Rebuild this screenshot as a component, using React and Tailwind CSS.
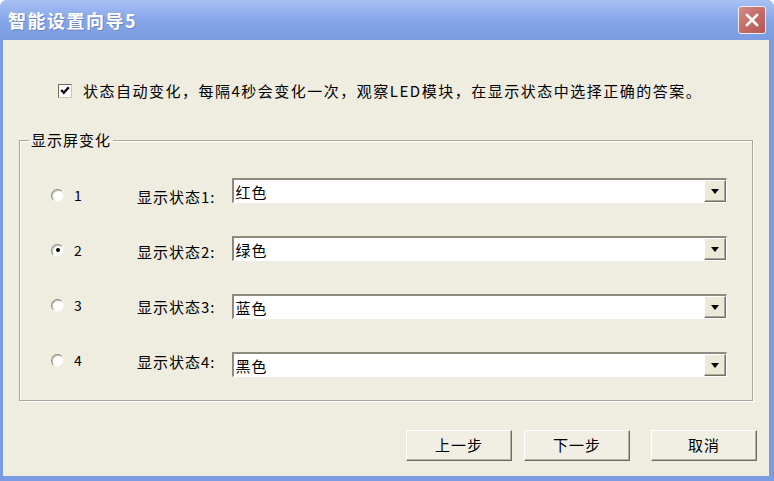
import React from "react";

const F = { fontFamily: '"Noto Sans CJK SC", "Noto Sans", sans-serif' };

function Radio({ checked }) {
  return (
    <div className="w-[13px] h-[13px] rounded-full border border-t-[#8a8a84] border-l-[#8a8a84] border-b-[#f4f3ee] border-r-[#f4f3ee] bg-white flex items-center justify-center shadow-[inset_1px_1px_0_#c9c7bb]">
      {checked && <div className="w-[4px] h-[4px] rounded-full bg-black" />}
    </div>
  );
}

function Combo({ value }) {
  return (
    <div className="w-[495px] h-[25px] border-t-[2px] border-l-[2px] border-t-[#8d8b80] border-l-[#8d8b80] border-b border-r border-b-white border-r-white bg-white flex items-stretch">
      <div className="flex-1 flex items-center pl-[2px] text-[15px] tracking-[1px] text-black leading-none">{value}</div>
      <div className="w-[22px] bg-[#ECE9D8] border border-t-white border-l-white border-b-[#716f64] border-r-[#716f64] shadow-[inset_-1px_-1px_0_#aca899] flex items-center justify-center">
        <svg width="8" height="5" viewBox="0 0 8 5"><path d="M0 0H8L4 5Z" fill="#000" /></svg>
      </div>
    </div>
  );
}

function Btn({ children }) {
  return (
    <div className="w-[106px] h-[31px] bg-[#F1EFE4] border border-t-white border-l-white border-b-[#6e6c62] border-r-[#6e6c62] shadow-[inset_-1px_-1px_0_#b3b1a5] flex items-center justify-center text-[15px] tracking-[1px] text-black">
      {children}
    </div>
  );
}

export default function App() {
  const rows = [
    { n: "1", v: "红色", c: false },
    { n: "2", v: "绿色", c: true },
    { n: "3", v: "蓝色", c: false },
    { n: "4", v: "黑色", c: false },
  ];
  return (
    <div style={F} className="w-[774px] h-[481px] bg-[#7B9BE2] rounded-t-[7px] flex flex-col overflow-hidden">
      <div className="h-[40px] flex items-center justify-between pl-[8px] pr-[8px] bg-gradient-to-b from-[#A9C1F3] via-[#86A6EA] to-[#7C9BE0]">
        <span className="text-white font-bold text-[18px] tracking-[1.5px] [text-shadow:1px_1px_0_#6a86c6]">智能设置向导5</span>
        <div className="w-[28px] h-[28px] rounded-[3px] border border-[#e9eef8] bg-gradient-to-br from-[#D48C86] via-[#C46C66] to-[#B7544F] flex items-center justify-center">
          <svg width="16" height="16" viewBox="0 0 16 16"><path d="M3 3L13 13M13 3L3 13" stroke="#fff" strokeWidth="2.6" strokeLinecap="square" /></svg>
        </div>
      </div>
      <div className="flex-1 ml-[3px] mr-[5px] mb-[5px] bg-[#EFECE0] flex flex-col text-black">
        <div className="flex items-center pl-[55px] mt-[43px] h-[15px]">
          <div className="w-[14px] h-[14px] bg-white border border-t-[#6e6c62] border-l-[#6e6c62] border-b-[#c9c7bb] border-r-[#c9c7bb] flex items-center justify-center">
            <svg width="10" height="9" viewBox="0 0 10 9"><path d="M1.2 4L3.8 6.8L8.8 1.2" stroke="#000" strokeWidth="2.4" fill="none" /></svg>
          </div>
          <span className="ml-[11px] text-[15px] tracking-[1.5px] leading-none">状态自动变化，每隔4秒会变化一次，观察LED模块，在显示状态中选择正确的答案。</span>
        </div>
        <fieldset className="ml-[16px] mt-[33px] w-[734px] h-[270px] border border-[#A8A699] shadow-[1px_1px_0_#fff,inset_1px_1px_0_#fff] px-0">
          <legend className="ml-[9px] px-[2px] text-[15px] tracking-[1px] leading-[18px]">显示屏变化</legend>
          <div className="flex mt-[29px]">
            <div className="flex flex-col ml-[31px] w-[86px] pt-[10px] gap-[41px]">
              {rows.map((r) => (
                <div key={r.n} className="flex items-center h-[14px]">
                  <Radio checked={r.c} />
                  <span className="ml-[10px] text-[14px] leading-none">{r.n}</span>
                </div>
              ))}
            </div>
            <div className="flex flex-col pt-[10px] gap-[39px]">
              {rows.map((r) => (
                <div key={r.n} className="h-[16px] flex items-center text-[15px] tracking-[1px] leading-none">显示状态{r.n}:</div>
              ))}
            </div>
            <div className="flex flex-col ml-[16px] gap-[33px]">
              {rows.map((r) => (
                <Combo key={r.n} value={r.v} />
              ))}
            </div>
          </div>
        </fieldset>
        <div className="flex justify-end pr-[12px] mt-[29px]">
          <Btn>上一步</Btn>
          <div className="w-[12px]" />
          <Btn>下一步</Btn>
          <div className="w-[21px]" />
          <Btn>取消</Btn>
        </div>
      </div>
    </div>
  );
}
